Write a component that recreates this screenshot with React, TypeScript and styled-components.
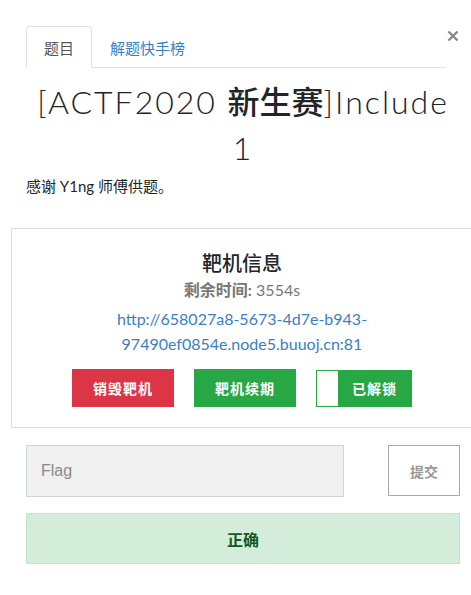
import React from "react";
import styled, { createGlobalStyle } from "styled-components";

const GlobalStyle = createGlobalStyle`
  html, body {
    margin: 0;
    padding: 0;
    background: #fff;
    overflow: hidden;
  }
  body {
    font-family: Lato, "Noto Sans CJK SC", sans-serif;
    color: #212529;
  }
`;

const Page = styled.div`
  width: 471px;
  padding: 26px 11px 0 26px;
  box-sizing: border-box;
`;

const Header = styled.div`
  display: flex;
  align-items: flex-start;
`;

const TabList = styled.ul`
  display: flex;
  width: 420px;
  margin: 0;
  padding: 0;
  list-style: none;
  border-bottom: 1px solid #dee2e6;
`;

const Tab = styled.li<{ $active?: boolean }>`
  height: 40px;
  padding: 0 17px;
  margin-bottom: -1px;
  display: flex;
  align-items: center;
  font-size: 15px;
  border: 1px solid ${(p) => (p.$active ? "#dee2e6" : "transparent")};
  border-bottom-color: ${(p) => (p.$active ? "#fff" : "transparent")};
  border-radius: 4px 4px 0 0;
  background: ${(p) => (p.$active ? "#fff" : "transparent")};
  color: ${(p) => (p.$active ? "#555" : "#3a7fc1")};
`;

const Close = styled.button`
  margin: 3px 0 0 auto;
  padding: 0;
  border: 0;
  background: none;
  width: 14px;
  height: 14px;
  display: flex;
  align-items: center;
  justify-content: center;
`;

const Title = styled.h3`
  margin: 11px 0 0;
  text-align: center;
  font-size: 32px;
  font-weight: 300;
  line-height: 46px;
  letter-spacing: 2px;
  color: #212529;
`;

const TitleCjk = styled.span`
  font-weight: 500;
  letter-spacing: 0;
`;

const Description = styled.p`
  margin: 4px 0 0;
  font-size: 15px;
  line-height: 22px;
`;

const Card = styled.div`
  margin: 31px 0 0 -15px;
  width: 462px;
  box-sizing: border-box;
  border: 1px solid #dcdcdc;
  padding: 20px 0 20px;
  display: flex;
  flex-direction: column;
  align-items: center;
  text-align: center;
`;

const CardTitle = styled.div`
  font-size: 20px;
  font-weight: 500;
  line-height: 28px;
  color: #212529;
`;

const Remaining = styled.div`
  font-size: 16px;
  line-height: 26px;
  color: #777;
  b {
    font-weight: 700;
  }
`;

const Link = styled.a`
  margin-top: 3px;
  width: 300px;
  font-size: 16px;
  line-height: 25px;
  color: #3a7fc1;
  text-decoration: none;
`;

const Actions = styled.div`
  margin-top: 13px;
  display: flex;
  gap: 20px;
  align-items: center;
`;

const ActionButton = styled.button<{ $color: string }>`
  width: 102px;
  height: 38px;
  border: 0;
  border-radius: 0;
  background: ${(p) => p.$color};
  color: #fff;
  font-family: Lato, "Noto Sans CJK SC", sans-serif;
  font-size: 14px;
  font-weight: 700;
  letter-spacing: 1px;
`;

const Toggle = styled.div`
  width: 96px;
  height: 37px;
  box-sizing: border-box;
  border: 1px solid #28a745;
  display: flex;
  background: #28a745;
`;

const Knob = styled.span`
  width: 21px;
  background: #fff;
`;

const ToggleLabel = styled.span`
  flex: 1;
  display: flex;
  align-items: center;
  justify-content: center;
  color: #fff;
  font-size: 14px;
  font-weight: 700;
  letter-spacing: 1px;
`;

const FlagRow = styled.div`
  margin-top: 17px;
  display: flex;
  justify-content: space-between;
  align-items: flex-start;
`;

const FlagInput = styled.input`
  width: 318px;
  height: 52px;
  box-sizing: border-box;
  border: 1px solid #ced4da;
  background: #f0f0f0;
  padding: 0 14px;
  font-family: "Liberation Sans", Arial, sans-serif;
  font-size: 16px;
  outline: none;
  &::placeholder {
    color: #8a8a8a;
  }
`;

const SubmitButton = styled.button`
  width: 72px;
  height: 51px;
  box-sizing: border-box;
  background: #fff;
  border: 1px solid #a9a9a9;
  border-radius: 0;
  color: #999;
  font-family: "Noto Sans CJK SC", sans-serif;
  font-size: 14px;
  font-weight: 700;
`;

const Alert = styled.div`
  margin-top: 16px;
  height: 51px;
  box-sizing: border-box;
  display: flex;
  align-items: center;
  justify-content: center;
  background: #d4edda;
  border: 1px solid #c3e6cb;
  color: #155724;
  font-size: 16px;
  font-weight: 700;
`;

export default function App() {
  return (
    <>
      <GlobalStyle />
      <Page>
        <Header>
          <TabList>
            <Tab $active>题目</Tab>
            <Tab>解题快手榜</Tab>
          </TabList>
          <Close aria-label="close">
            <svg width="12" height="12" viewBox="0 0 12 12">
              <path d="M1.5 1.5 L10.5 10.5 M10.5 1.5 L1.5 10.5" stroke="#888" strokeWidth="2.4" />
            </svg>
          </Close>
        </Header>
        <Title>
          [ACTF2020 <TitleCjk>新生赛</TitleCjk>]Include 1
        </Title>
        <Description>感谢 Y1ng 师傅供题。</Description>
        <Card>
          <CardTitle>靶机信息</CardTitle>
          <Remaining>
            <b>剩余时间:</b> 3554s
          </Remaining>
          <Link href="#">http://658027a8-5673-4d7e-b943-97490ef0854e.node5.buuoj.cn:81</Link>
          <Actions>
            <ActionButton $color="#dc3545">销毁靶机</ActionButton>
            <ActionButton $color="#28a745">靶机续期</ActionButton>
            <Toggle>
              <Knob />
              <ToggleLabel>已解锁</ToggleLabel>
            </Toggle>
          </Actions>
        </Card>
        <FlagRow>
          <FlagInput placeholder="Flag" />
          <SubmitButton>提交</SubmitButton>
        </FlagRow>
        <Alert>正确</Alert>
      </Page>
    </>
  );
}
